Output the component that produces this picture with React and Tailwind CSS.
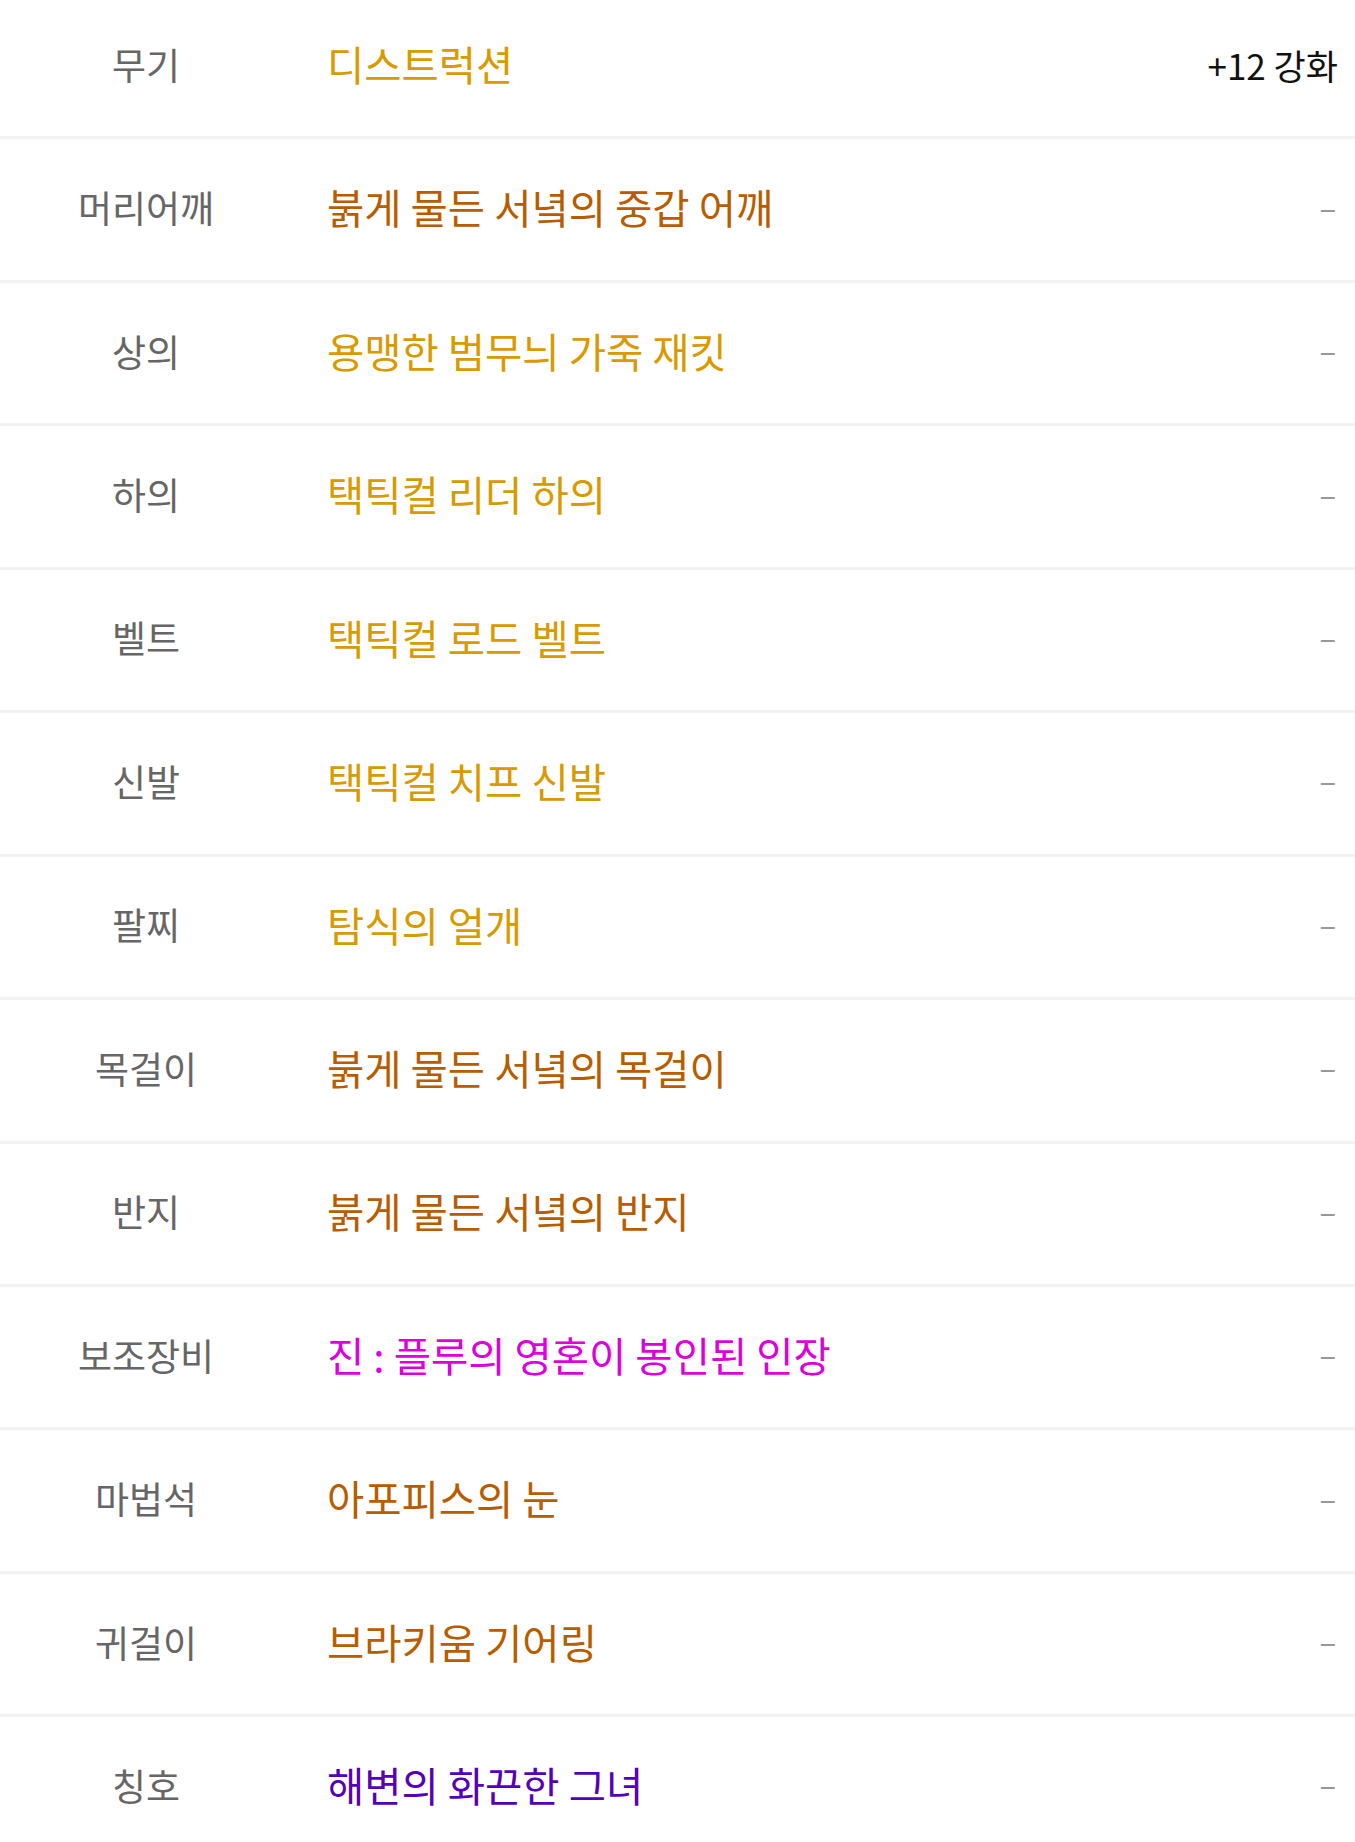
import React from "react";

const GOLD = "text-[#d99a00]";
const BROWN = "text-[#b85c00]";
const MAGENTA = "text-[#dd00dd]";
const PURPLE = "text-[#5500bb]";

const rows = [
  { label: "무기", value: "디스트럭션", color: GOLD, right: "+12 강화" },
  { label: "머리어깨", value: "붉게 물든 서녘의 중갑 어깨", color: BROWN },
  { label: "상의", value: "용맹한 범무늬 가죽 재킷", color: GOLD },
  { label: "하의", value: "택틱컬 리더 하의", color: GOLD },
  { label: "벨트", value: "택틱컬 로드 벨트", color: GOLD },
  { label: "신발", value: "택틱컬 치프 신발", color: GOLD },
  { label: "팔찌", value: "탐식의 얼개", color: GOLD },
  { label: "목걸이", value: "붉게 물든 서녘의 목걸이", color: BROWN },
  { label: "반지", value: "붉게 물든 서녘의 반지", color: BROWN },
  { label: "보조장비", value: "진 : 플루의 영혼이 봉인된 인장", color: MAGENTA },
  { label: "마법석", value: "아포피스의 눈", color: BROWN },
  { label: "귀걸이", value: "브라키움 기어링", color: BROWN },
  { label: "칭호", value: "해변의 화끈한 그녀", color: PURPLE },
];

export default function App() {
  return (
    <div
      className="bg-white w-full -mt-[4px]"
      style={{ fontFamily: '"Noto Sans CJK KR", "Noto Sans", sans-serif' }}
    >
      {rows.map((r, i) => (
        <div
          key={i}
          className="flex items-center h-[143.45px] border-b-[3px] border-[#f2f2f2] box-border"
        >
          <div className="w-[292px] shrink-0 text-center text-[37px] leading-none text-[#666666] -mt-[4px]">
            {r.label}
          </div>
          <div className={`flex-1 pl-[35px] text-[40.5px] leading-none -mt-[4px] ${r.color}`}>
            {r.value}
          </div>
          <div className="pr-[17px] leading-none">
            {r.right ? (
              <span className="block text-[35px] text-[#111111] -mt-[4px]">{r.right}</span>
            ) : (
              <span className="block text-[31px] text-[#999999] -mt-[7px] mr-[2px]">–</span>
            )}
          </div>
        </div>
      ))}
    </div>
  );
}
